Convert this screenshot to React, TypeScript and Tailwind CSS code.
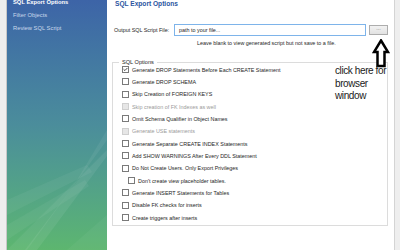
import { Check } from 'lucide-react'

const options = [
    { label: 'Generate DROP Statements Before Each CREATE Statement', checked: true },
    { label: 'Generate DROP SCHEMA' },
    { label: 'Skip Creation of FOREIGN KEYS' },
    { label: 'Skip creation of FK Indexes as well', disabled: true },
    { label: 'Omit Schema Qualifier in Object Names' },
    { label: 'Generate USE statements', disabled: true },
    { label: 'Generate Separate CREATE INDEX Statements' },
    { label: 'Add SHOW WARNINGS After Every DDL Statement' },
    { label: 'Do Not Create Users. Only Export Privileges' },
    { label: "Don't create view placeholder tables.", indent: true },
    { label: 'Generate INSERT Statements for Tables' },
    { label: 'Disable FK checks for inserts' },
    { label: 'Create triggers after inserts' },
]

function Sidebar() {
    return (
        <div className="relative w-[100px] h-full overflow-hidden bg-gradient-to-b from-[#3d64a7] via-[#4b8d9b] to-[#5db66f]">
            {/* light rays */}
            <svg className="absolute inset-0" width="100" height="250" viewBox="0 0 100 250">
                <polygon points="70,180 100,130 100,140 20,250 0,250" fill="#ffffff" opacity="0.06" />
                <polygon points="75,175 100,150 100,156 30,250 18,250" fill="#ffffff" opacity="0.07" />
                <polygon points="0,200 80,165 85,172 0,215" fill="#ffffff" opacity="0.05" />
                <polygon points="0,225 78,180 82,186 0,240" fill="#ffffff" opacity="0.05" />
                <polygon points="60,250 100,215 100,250" fill="#ffffff" opacity="0.04" />
            </svg>
            <div className="relative flex flex-col pl-[6px] text-[5.8px] leading-[8px] font-['Liberation_Sans',sans-serif] whitespace-nowrap">
                <div className="-mt-[2px] font-bold text-white">SQL Export Options</div>
                <div className="mt-[5px] text-[#c9d8ec]">Filter Objects</div>
                <div className="mt-[5px] text-[#c9d8ec]">Review SQL Script</div>
            </div>
        </div>
    )
}

function CheckRow({ label, checked, disabled, indent }: { label: string; checked?: boolean; disabled?: boolean; indent?: boolean }) {
    return (
        <div className={`flex items-center h-[12.33px] ${indent ? 'pl-[6px]' : ''}`}>
            <div
                className={`w-[7px] h-[7px] border flex items-center justify-center ${disabled ? 'border-[#cfcfcf] bg-[#e6e6e6]' : 'border-[#7a7a7a] bg-white'}`}
            >
                {checked && <Check size={7} strokeWidth={4} className="text-[#222]" />}
            </div>
            <span className={`ml-[3px] whitespace-nowrap ${disabled ? 'text-[#9a9a9a]' : 'text-[#1e1e1e]'}`}>{label}</span>
        </div>
    )
}

export default function App() {
    return (
        <div className="flex w-[400px] h-[250px] overflow-hidden bg-white font-['Liberation_Sans',sans-serif] text-[5.4px]">
            <div className="w-[7px] h-full bg-[#eeeeee] border-r border-[#c8c8c8]" />
            <Sidebar />

            {/* Main panel */}
            <div className="relative flex-1 flex flex-col pl-[5px] pr-[6px]">
                <div className="pl-[3px] -mt-[1px] text-[6.6px] font-bold text-[#2b54a0] leading-[10px] whitespace-nowrap">SQL Export Options</div>

                <div className="flex items-center mt-[15px] h-[12px]">
                    <span className="pl-[2px] w-[62px] text-[#1e1e1e] whitespace-nowrap">Output SQL Script File:</span>
                    <div className="w-[192px] h-[12px] border border-[#7eb4ea] flex items-center pl-[4px] text-[#1e1e1e]">path to your file...</div>
                    <div className="ml-[3px] w-[19px] h-[10px] border border-[#adadad] bg-gradient-to-b from-[#f2f2f2] to-[#e2e2e2] flex items-center justify-center text-[#555] leading-none pb-[2px]">
                        ...
                    </div>
                </div>
                <div className="mt-[3px] pl-[85px] text-[#1e1e1e] whitespace-nowrap">Leave blank to view generated script but not save to a file.</div>

                <fieldset className="mt-[11px] w-[276px] h-[168px] border border-[#dcdcdc] pl-[9px] pr-[4px]">
                    <legend className="ml-[-3px] px-[3px] text-[5.6px] text-[#1e1e1e]">SQL Options</legend>
                    <div className="flex flex-col -mt-[3px]">
                        {options.map((o) => (
                            <CheckRow key={o.label} {...o} />
                        ))}
                    </div>
                </fieldset>

                {/* annotation */}
                <svg className="absolute left-[265px] top-[39px]" width="18" height="29" viewBox="0 0 18 29">
                    <polygon points="9,1.5 16,13 12.5,13 12.5,27 5.5,27 5.5,13 2,13" fill="white" stroke="black" strokeWidth="2.5" strokeLinejoin="miter" />
                </svg>
                <div className="absolute left-[228px] top-[65px] text-[10px] tracking-[-0.4px] leading-[12.5px] text-[#1a1a1a] whitespace-nowrap">
                    click here for
                    <br />
                    browser
                    <br />
                    window
                </div>
            </div>

            <div className="w-[6px] h-full bg-[#eeeeee] border-l border-[#d4d4d4]" />
        </div>
    )
}
